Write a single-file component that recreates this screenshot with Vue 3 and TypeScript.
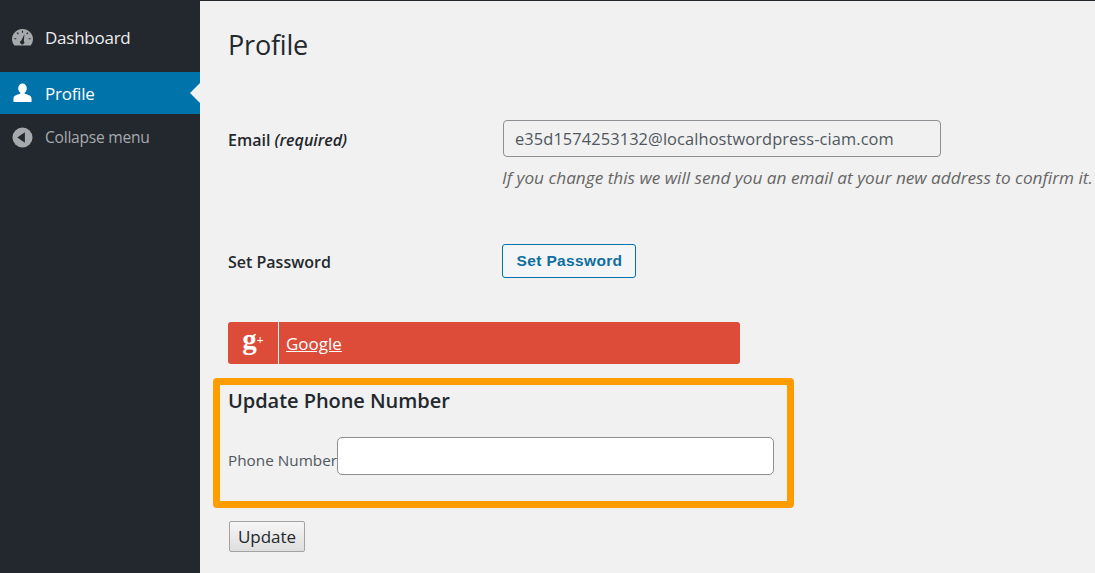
<script setup lang="ts">
const menu = [
  { label: 'Dashboard', icon: 'dash' },
  { label: 'Profile', icon: 'user', active: true },
  { label: 'Collapse menu', icon: 'collapse' },
]
</script>

<template>
  <div class="page">
    <aside class="sidebar">
      <div
        v-for="item in menu"
        :key="item.label"
        class="menu-item"
        :class="[item.icon, { active: item.active }]"
      >
        <svg v-if="item.icon === 'dash'" class="icon" viewBox="0 0 22 18">
          <path fill="#a7aaad" d="M11 0C5 0 0 4.700 0 10.600c0 2.600.9 4.900 2.500 6.700h17c1.600-1.800 2.500-4.100 2.500-6.700C22 4.700 17 0 11 0z" />
          <path fill="#23272e" d="M13 5.500l-3.200 6.600a2.200 2.200 0 1 0 2.600.5zM10.400 2h1.200v2h-1.200zM4.900 4.300l.9-.9 1.400 1.500-.9.9zM15 4.900l1.300-1.500.9.9-1.400 1.500zM2.500 9.700h2v1.200h-2zM17.500 9.700h2v1.200h-2z" />
        </svg>
        <svg v-else-if="item.icon === 'user'" class="icon" viewBox="0 0 22 22">
          <path fill="#fff" d="M11 .5c2.600 0 4.500 2.200 4.500 5 0 2.200-1 4-2.300 4.800v1c2.500.6 7.300 1.700 7.300 5.200v2.500c0 .6-.4 1-1 1h-17c-.6 0-1-.4-1-1v-2.500c0-3.500 4.800-4.600 7.300-5.200v-1C7.500 9.500 6.500 7.700 6.500 5.500c0-2.800 1.900-5 4.500-5z" />
        </svg>
        <svg v-else class="icon" viewBox="0 0 22 22">
          <circle cx="11" cy="11" r="10.500" fill="#a7aaad" />
          <path fill="#23272e" d="M13.500 5.500v11L5.500 11z" />
        </svg>
        <span>{{ item.label }}</span>
      </div>
    </aside>

    <main class="content">
      <h1 class="title">Profile</h1>

      <div class="row email-row">
        <label class="label"><b>Email</b> <em>(required)</em></label>
        <div>
          <input class="email-input" type="text" value="e35d1574253132@localhostwordpress-ciam.com" />
          <p class="hint">If you change this we will send you an email at your new address to confirm it.</p>
        </div>
      </div>

      <div class="row password-row">
        <label class="label"><b>Set Password</b></label>
        <button class="password-btn" type="button">Set Password</button>
      </div>

      <div class="google">
        <span class="google-icon">g<sup>+</sup></span>
        <a class="google-link" href="#">Google</a>
      </div>

      <section class="phone-box">
        <h2 class="phone-title">Update Phone Number</h2>
        <div class="phone-row">
          <label class="phone-label">Phone Number</label>
          <input class="phone-input" type="text" />
        </div>
      </section>

      <button class="update-btn" type="button">Update</button>
    </main>
  </div>
</template>

<style scoped>
.page {
  display: flex;
  height: 573px;
  overflow: hidden;
  font-family: "Open Sans", "Noto Sans", sans-serif;
  color: #23282d;
  background: #f1f1f1;
}

.sidebar {
  width: 200px;
  flex: none;
  background: #23272e;
  padding-top: 16px;
  box-sizing: border-box;
}

.menu-item {
  display: flex;
  align-items: center;
  gap: 12px;
  height: 42px;
  padding-left: 12px;
  color: #eee;
  font-size: 17px;
  letter-spacing: -0.25px;
  position: relative;
}

.menu-item.dash {
  margin-bottom: 14px;
}

.menu-item.active {
  background: #0073aa;
  color: #fff;
}

.menu-item.active::after {
  content: "";
  position: absolute;
  right: 0;
  top: 11px;
  border: 10px solid transparent;
  border-left: 0;
  border-right-color: #f1f1f1;
}

.menu-item.collapse {
  height: 46px;
  color: #a7aaad;
  font-size: 15.600px;
}

.icon {
  width: 21px;
  height: 21px;
  flex: none;
}

.content {
  flex: 1;
  min-width: 0;
  padding: 0 0 0 28px;
  border-top: 1px solid #23282d;
}

.title {
  margin: 25px 0 0;
  font-size: 27px;
  line-height: 38px;
  font-weight: 400;
  letter-spacing: -0.2px;
}

.row {
  display: flex;
}

.email-row {
  margin-top: 56px;
  height: 103px;
}

.password-row {
  height: 76px;
  align-items: center;
  margin-bottom: 23px;
}

.label {
  width: 274px;
  flex: none;
  font-size: 16px;
}

.email-row .label {
  padding-top: 9px;
}

.password-row .label {
  padding-top: 2px;
}

.label b {
  font-weight: 600;
}

.label em {
  font-size: 16px;
  font-weight: 600;
}

.email-input {
  display: block;
  width: 438px;
  height: 37px;
  box-sizing: border-box;
  padding: 0 11px;
  margin-left: 1px;
  border: 1px solid #8c8f94;
  border-radius: 4px;
  background: #f1f1f1;
  color: #50575e;
  font: 16.400px "Open Sans", sans-serif;
  letter-spacing: 0.1px;
}

.hint {
  margin: 9px 0 0;
  font-size: 17.200px;
  font-style: italic;
  color: #666;
  white-space: nowrap;
}

.password-btn {
  width: 134px;
  height: 34px;
  box-sizing: border-box;
  padding: 0 0 0 1px;
  border: 1px solid #0073aa;
  border-radius: 3px;
  background: #f3f5f6;
  color: #0f6f9f;
  font: 700 15.500px "Liberation Sans", sans-serif;
  letter-spacing: 0.35px;
}

.google {
  display: flex;
  align-items: center;
  width: 512px;
  height: 42px;
  border-radius: 3px;
  background: #dd4b39;
  color: #fff;
}

.google-icon {
  width: 51px;
  height: 100%;
  box-sizing: border-box;
  flex: none;
  border-right: 1px solid #f1f1f1;
  text-align: center;
  font: 700 29px/34px "Liberation Serif", serif;
}

.google-icon sup {
  font-size: 12px;
  line-height: 0;
  vertical-align: 5px;
}

.google-link {
  margin-left: 7px;
  color: #fff;
  font-size: 17px;
}

.phone-box {
  width: 581px;
  height: 130px;
  box-sizing: border-box;
  margin: 14px 0 13px -15px;
  padding: 0 0 0 8px;
  border: 7px solid #ff9c00;
  border-radius: 4px;
}

.phone-title {
  margin: 0;
  font-size: 20px;
  line-height: 31px;
  font-weight: 600;
  letter-spacing: -0.05px;
}

.phone-row {
  display: flex;
  align-items: center;
  margin-top: 21px;
}

.phone-label {
  font-size: 15.300px;
  color: #50575e;
  white-space: nowrap;
  width: 109px;
  flex: none;
  padding-top: 8px;
}

.phone-input {
  width: 437px;
  height: 38px;
  box-sizing: border-box;
  border: 1px solid #8c8f94;
  border-radius: 5px;
  background: #fff;
}

.update-btn {
  display: block;
  width: 76px;
  height: 31px;
  margin-left: 1px;
  padding: 0;
  box-sizing: border-box;
  border: 1px solid #a3a3a3;
  border-radius: 2px;
  background: linear-gradient(#f6f6f6, #dedede);
  color: #23282d;
  font: 17px "Open Sans", sans-serif;
}
</style>
